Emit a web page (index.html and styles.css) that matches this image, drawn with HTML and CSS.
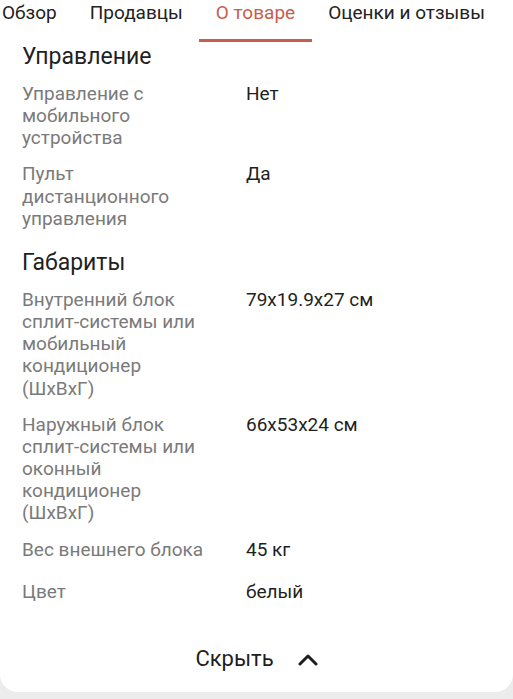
FILE: index.html
```html
<!DOCTYPE html>
<html lang="ru">
<head>
<meta charset="utf-8">
<link rel="stylesheet" href="styles.css">
</head>
<body>
<div class="card">
  <nav class="tabs">
    <span class="tab tab-first">Обзор</span>
    <span class="tab">Продавцы</span>
    <span class="tab tab-active">О товаре</span>
    <span class="tab">Оценки и отзывы</span>
  </nav>

  <section class="group group-first">
    <h2 class="group-title">Управление</h2>
    <div class="row"><div class="label">Управление с мобильного устройства</div><div class="value">Нет</div></div>
    <div class="row"><div class="label">Пульт дистанционного управления</div><div class="value">Да</div></div>
  </section>

  <section class="group">
    <h2 class="group-title">Габариты</h2>
    <div class="row"><div class="label">Внутренний блок сплит-системы или мобильный кондиционер (ШхВхГ)</div><div class="value">79x19.9x27 см</div></div>
    <div class="row"><div class="label">Наружный блок сплит-системы или оконный кондиционер (ШхВхГ)</div><div class="value">66x53x24 см</div></div>
    <div class="row"><div class="label">Вес внешнего блока</div><div class="value">45 кг</div></div>
    <div class="row"><div class="label">Цвет</div><div class="value">белый</div></div>
  </section>

  <div class="footer">
    <span class="hide-text">Скрыть</span>
    <svg class="chevron" width="20" height="14" viewBox="0 0 20 14"><path d="M2 12 L10 4 L18 12" fill="none" stroke="#1e1e1e" stroke-width="3" stroke-linecap="round" stroke-linejoin="round"/></svg>
  </div>
</div>
</body>
</html>
```
FILE: styles.css
```css
html, body {
  margin: 0;
  padding: 0;
  background: #ececec;
}
body {
  width: 513px;
  height: 699px;
  overflow: hidden;
  font-family: Roboto, "Noto Sans", sans-serif;
}
.card {
  background: #ffffff;
  border-radius: 0 0 18px 18px;
  height: 692px;
  box-sizing: border-box;
  display: flex;
  flex-direction: column;
}
.tabs {
  display: flex;
  height: 42px;
  box-sizing: border-box;
  padding-left: 2px;
}
.tab {
  font-size: 19px;
  color: #222222;
  line-height: 26px;
  padding: 0 16.5px;
  height: 42px;
  box-sizing: border-box;
  white-space: nowrap;
}
.tab-first {
  padding-left: 0;
}
.tab-active {
  color: #c95d4c;
  border-bottom: 3px solid #c95d4c;
}
.group {
  padding: 12px 22px 0 22px;
}
.group-first {
  padding-top: 1px;
}
.group-title {
  margin: 0 0 5px 0;
  font-size: 23px;
  font-weight: 400;
  line-height: 28px;
  color: #1f1f1f;
}
.row {
  display: grid;
  grid-template-columns: 188px 1fr;
  column-gap: 36px;
  padding: 7px 0;
  min-height: 42px;
  box-sizing: border-box;
  font-size: 19px;
  line-height: 22.15px;
}
.label {
  color: #7a7a7a;
}
.value {
  color: #1f1f1f;
}
.footer {
  margin-top: auto;
  padding-bottom: 19px;
  display: flex;
  justify-content: center;
  align-items: center;
  gap: 24px;
  height: 28px;
}
.hide-text {
  font-size: 22px;
  line-height: 28px;
  color: #1e1e1e;
}
.chevron {
  display: block;
}
```
